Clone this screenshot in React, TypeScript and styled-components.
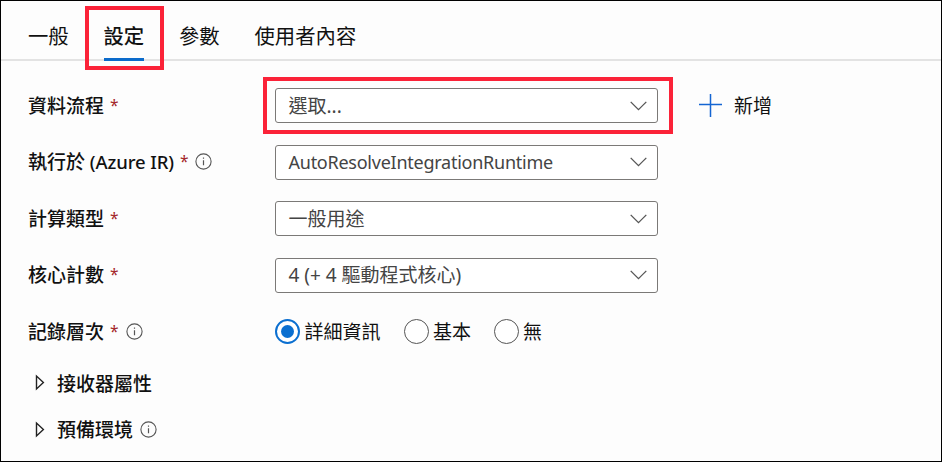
import React from "react";
import styled, { createGlobalStyle, css } from "styled-components";

const GlobalStyle = createGlobalStyle`
  * { box-sizing: border-box; }
  body { margin: 0; background: #fdfdfd; }
`;

const Frame = styled.main`
  width: 942px;
  height: 462px;
  border: 1px solid #000;
  background: #fdfdfd;
  color: #111;
  font-family: "Noto Sans", "Noto Sans CJK TC", sans-serif;
  font-size: 19px;
  line-height: 28px;
  white-space: nowrap;
  overflow: hidden;
`;

const TabBar = styled.nav`
  display: flex;
  height: 60px;
  padding-left: 27px;
  gap: 34.8px;
  border-bottom: 2px solid #e3e3e3;
  font-size: 20.35px;
`;

const Tab = styled.div<{ $active?: boolean }>`
  position: relative;
  height: 60px;
  padding-top: 21px;
  font-weight: ${(p) => (p.$active ? 500 : 400)};
  ${(p) =>
    p.$active &&
    css`
      border-bottom: 3px solid #0b6bcb;
    `}
`;

const Highlight = styled.span<{ $inset: string }>`
  position: absolute;
  inset: ${(p) => p.$inset};
  border: 4px solid #fb2238;
  pointer-events: none;
`;

const Form = styled.section`
  padding: 16.5px 0 0 27px;
`;

const Row = styled.div`
  display: grid;
  grid-template-columns: 247px 383px auto;
  align-items: center;
  height: 56.5px;
`;

const Label = styled.div`
  display: flex;
  align-items: center;
  font-weight: 500;
`;

const Latin = styled.span<{ $size: number; $spacing: number }>`
  font-size: ${(p) => p.$size}px;
  letter-spacing: ${(p) => p.$spacing}px;
  white-space: pre;
`;

const Required = styled.span`
  position: relative;
  top: -1px;
  margin-left: 6px;
  color: #a4262c;
  font-size: 15.5px;
  font-weight: 400;
`;

const InfoSvg = styled.svg`
  width: 17px;
  height: 17px;
  margin: -1px 0 0 7px;
  flex: none;
`;

const Select = styled.div`
  position: relative;
  display: flex;
  align-items: center;
  justify-content: space-between;
  height: 35px;
  padding: 0 10px 0 12.5px;
  border: 1.5px solid #7b7977;
  border-radius: 3px;
  background: #fff;
  color: #444;
`;

const AddButton = styled.div`
  display: flex;
  align-items: center;
  gap: 12px;
  margin-left: 41px;
`;

const RadioGroup = styled.div`
  display: flex;
  align-items: center;
`;

const Radio = styled.label<{ $gap: number }>`
  display: flex;
  align-items: center;
  gap: 4.5px;
  margin-right: ${(p) => p.$gap}px;
`;

const Circle = styled.span<{ $checked?: boolean }>`
  display: grid;
  place-items: center;
  width: 25px;
  height: 25px;
  margin-top: -1px;
  border: ${(p) => (p.$checked ? "2px solid #0b6fd0" : "1.5px solid #555")};
  border-radius: 50%;
  background: #fff;
`;

const Dot = styled.span`
  width: 13px;
  height: 13px;
  border-radius: 50%;
  background: #0b6fd0;
`;

const Disclosure = styled.div`
  display: flex;
  align-items: center;
  height: 46.5px;
  padding: 1px 0 0 7px;
  font-weight: 500;
`;

const Caret = styled.svg`
  width: 10px;
  height: 17px;
  margin: -2px 12px 0 0;
`;

const Info = () => (
  <InfoSvg viewBox="0 0 17 17" fill="none">
    <circle cx="8.5" cy="8.5" r="7.6" stroke="#555" strokeWidth="1.1" />
    <path d="M8.5 7.3v5M8.5 4.4v1.3" stroke="#555" strokeWidth="1.2" />
  </InfoSvg>
);

const Chevron = () => (
  <svg width="17" height="10" viewBox="0 0 17 10" fill="none">
    <path d="M.7 .9 8.5 8.6 16.3 .9" stroke="#555" strokeWidth="1.3" />
  </svg>
);

const Plus = () => (
  <svg width="23" height="23" viewBox="0 0 23 23" fill="none">
    <path d="M11.5 0v23M0 10.5h23" stroke="#1465d2" strokeWidth="1.5" />
  </svg>
);

const Triangle = () => (
  <Caret viewBox="0 0 10 17" fill="none">
    <path d="M1.5 2v13L8.4 8.5z" stroke="#222" strokeWidth="1.4" />
  </Caret>
);

export default function App() {
  return (
    <Frame>
      <GlobalStyle />
      <TabBar>
        <Tab>一般</Tab>
        <Tab $active>
          設定
          <Highlight $inset="5px -20px -12px -19px" />
        </Tab>
        <Tab>參數</Tab>
        <Tab>使用者內容</Tab>
      </TabBar>
      <Form>
        <Row>
          <Label>資料流程<Required>*</Required></Label>
          <Select>
            <span>選取...</span>
            <Chevron />
            <Highlight $inset="-12.5px -16px -12px -13.5px" />
          </Select>
          <AddButton><Plus />新增</AddButton>
        </Row>
        <Row>
          <Label>
            執行於<Latin $size={18.5} $spacing={-0.1}> (Azure IR)</Latin><Required>*</Required><Info />
          </Label>
          <Select><Latin $size={18} $spacing={-0.25}>AutoResolveIntegrationRuntime</Latin><Chevron /></Select>
        </Row>
        <Row>
          <Label>計算類型<Required>*</Required></Label>
          <Select><span>一般用途</span><Chevron /></Select>
        </Row>
        <Row>
          <Label>核心計數<Required>*</Required></Label>
          <Select><span>4 (+ 4 驅動程式核心)</span><Chevron /></Select>
        </Row>
        <Row>
          <Label>記錄層次<Required>*</Required><Info /></Label>
          <RadioGroup>
            <Radio $gap={23}><Circle $checked><Dot /></Circle>詳細資訊</Radio>
            <Radio $gap={22.5}><Circle />基本</Radio>
            <Radio $gap={0}><Circle />無</Radio>
          </RadioGroup>
        </Row>
        <Disclosure><Triangle />接收器屬性</Disclosure>
        <Disclosure><Triangle />預備環境<Info /></Disclosure>
      </Form>
    </Frame>
  );
}
